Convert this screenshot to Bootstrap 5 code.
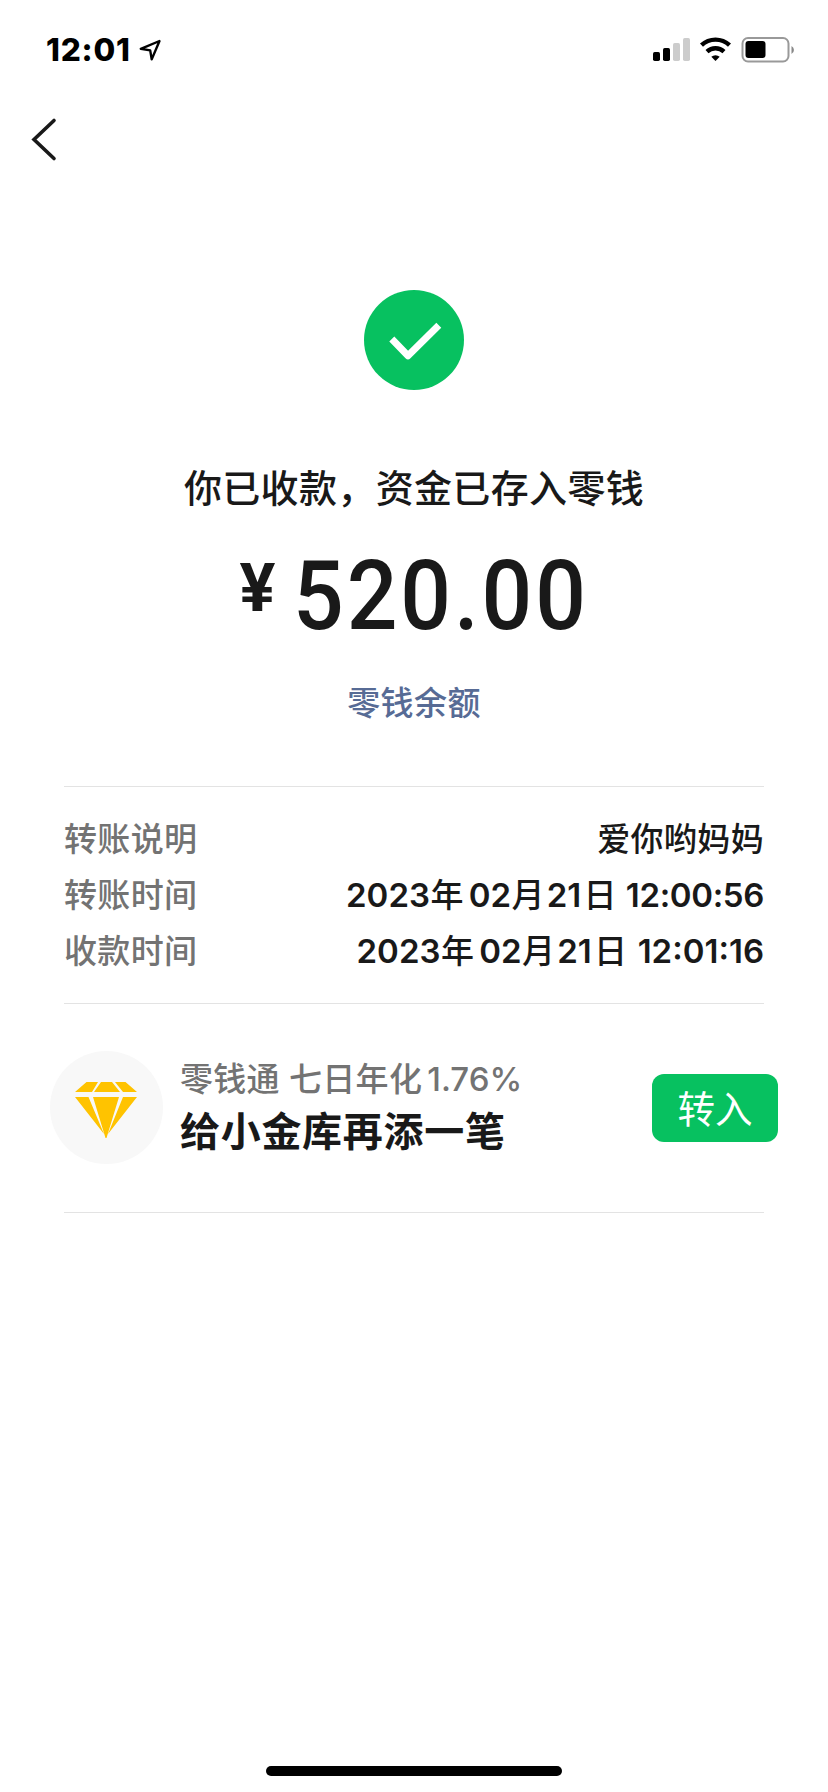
<!DOCTYPE html>
<html lang="zh-CN">
<head>
<meta charset="utf-8">
<meta name="viewport" content="width=device-width, initial-scale=1">
<title>收款详情</title>
<link href="https://cdn.jsdelivr.net/npm/bootstrap@5.3.0/dist/css/bootstrap.min.css" rel="stylesheet">
<style>
  body { font-family: Inter, "Noto Sans CJK SC", sans-serif; color: #191919; background: #fff; font-weight: 500; }
  .screen { height: 1792px; overflow: hidden; }
  svg { display: block; flex: none; }
  .status-bar { height: 100px; padding: 0 33px 0 46px; color: #000; }
  .clock { font-size: 31.5px; font-weight: 800; line-height: 100px; letter-spacing: .8px; }
  .nav-top { height: 80px; padding-left: 30px; }
  .result-icon { margin-top: 110px; }
  .headline { font-size: 38px; line-height: 56px; letter-spacing: .35px; margin-top: 70px; }
  .amount { font-family: Roboto, sans-serif; font-weight: 500; font-size: 96px; line-height: 100px; margin-top: 30px; }
  .yen { font-size: 67px; font-weight: 700; line-height: 72px; margin: 6px 18px 0 0; }
  .digits { letter-spacing: 3.1px; transform: scaleX(.93); transform-origin: left center; margin-right: -23px; }
  .balance-link { color: #576b95; font-size: 33px; line-height: 48px; letter-spacing: .4px; margin-top: 33px; text-decoration: none; }
  .details { margin: 59px 64px 0; border-top: 1px solid #e3e3e3; border-bottom: 1px solid #e3e3e3; padding: 24px 0; }
  .details .line { height: 56px; font-size: 33px; line-height: 56px; letter-spacing: .35px; }
  .details .name { color: #737373; }
  .stamp { display: flex; font-weight: 600; letter-spacing: 0; white-space: nowrap; }
  .stamp > span { display: flex; justify-content: center; }
  .stamp .yr { width: 84px; }
  .stamp .mo { width: 42px; margin-left: 5px; }
  .stamp .dy { width: 38px; }
  .stamp .cn { width: 34px; font-weight: 500; }
  .stamp .tm { width: 138px; margin-left: 9px; justify-content: flex-end; letter-spacing: -.35px; }
  .stamp .tm-narrow { width: 127.5px; letter-spacing: 0; }
  .promo { margin: 0 50px; height: 208px; padding-bottom: 1px; }
  .gem { width: 113px; height: 113px; background: #f8f8f8; }
  .gem svg { margin: 5px 1px 0 0; }
  .promo-text { margin-left: 17px; padding-top: 1px; }
  .rate { color: #737373; font-size: 33px; line-height: 48px; letter-spacing: .3px; }
  .percent { margin-left: 5px; letter-spacing: 0; }
  .pitch { font-size: 40px; line-height: 58px; font-weight: 700; letter-spacing: .7px; }
  .btn-in { --bs-btn-bg: #07c160; --bs-btn-color: #fff; --bs-btn-border-width: 0; width: 126px; height: 68px; border-radius: 12px; font-size: 37.5px; padding: 3px 0 0; line-height: 63px; font-weight: 400; margin-top: 1px; }
  .rule { height: 1px; margin: 0 64px; background: #e3e3e3; }
  .home-bar { width: 296px; height: 10px; background: #000; margin-bottom: 16px; }
</style>
</head>
<body>
<main class="screen d-flex flex-column">
  <header class="status-bar d-flex align-items-center justify-content-between">
    <div class="d-flex align-items-center">
      <span class="clock">12:01</span>
      <svg class="ms-2" width="24" height="24" viewBox="0 0 24 24" fill="none" stroke="#000" stroke-width="2.4" stroke-linejoin="round"><path d="M20.500 3 1.800 10.800l9.400 1.600 1.500 9Z"/></svg>
    </div>
    <svg width="142" height="26" viewBox="0 0 142 26">
      <rect x="0" y="15" width="7" height="9" rx="1.7"/><rect x="10" y="11" width="7" height="13" rx="1.7"/>
      <g fill="#ccc"><rect x="20" y="6" width="7" height="18" rx="1.7"/><rect x="30" y="1" width="7" height="23" rx="1.7"/></g>
      <g fill="none" stroke="#000" stroke-width="4.4"><path d="M48.500 8.200a20.500 20.500 0 0 1 28 0"/><path d="M54 14.600a12.600 12.600 0 0 1 17 0"/></g>
      <path d="M58.300 19.800a6.200 6.200 0 0 1 8.400 0L62.500 24Z"/>
      <rect x="89.500" y="1" width="46" height="23.500" rx="5.500" fill="none" stroke="#999" stroke-width="2"/>
      <rect x="92.500" y="4" width="20" height="17" rx="3"/>
      <path d="M138.500 9a4.500 4.500 0 0 1 0 8Z" fill="#888"/>
    </svg>
  </header>
  <nav class="nav-top">
    <svg width="28" height="80" viewBox="0 0 28 80" fill="none" stroke="#191919" stroke-width="3.600" stroke-linecap="round"><path d="M24 20.500 4 39.500l20 19"/></svg>
  </nav>
  <section class="d-flex flex-column align-items-center">
    <svg class="result-icon" width="100" height="100" viewBox="0 0 100 100"><circle cx="50" cy="50" r="50" fill="#07c160"/><path d="M27.800 49 44 65.700 74.800 35.300" fill="none" stroke="#fff" stroke-width="7" stroke-linejoin="round"/></svg>
    <div class="headline">你已收款，资金已存入零钱</div>
    <div class="amount d-flex"><span class="yen">¥</span><span class="digits">520.00</span></div>
    <a class="balance-link" href="#">零钱余额</a>
  </section>
  <section class="details">
    <div class="line d-flex justify-content-between"><span class="name">转账说明</span><span>爱你哟妈妈</span></div>
    <div class="line d-flex justify-content-between"><span class="name">转账时间</span><div class="stamp"><span class="yr">2023</span><span class="cn">年</span><span class="mo">02</span><span class="cn">月</span><span class="dy">21</span><span class="cn">日</span><span class="tm">12:00:56</span></div></div>
    <div class="line d-flex justify-content-between"><span class="name">收款时间</span><div class="stamp"><span class="yr">2023</span><span class="cn">年</span><span class="mo">02</span><span class="cn">月</span><span class="dy">21</span><span class="cn">日</span><span class="tm tm-narrow">12:01:16</span></div></div>
  </section>
  <section class="promo d-flex align-items-center">
    <div class="gem rounded-circle d-flex align-items-center justify-content-center">
      <svg width="64" height="58" viewBox="0 0 64 58" fill="#ffc300"><path d="M12.500 1H24l-6 10H1ZM27 1h11l8 10H20ZM41 1h10.500L63 11H49ZM1 16h13.500L30 53ZM19 16h26L32.500 57h-1ZM49 16h14L34 53Z"/></svg>
    </div>
    <div class="promo-text flex-grow-1">
      <div class="rate">零钱通 七日年化<span class="percent">1.76%</span></div>
      <div class="pitch">给小金库再添一笔</div>
    </div>
    <button class="btn btn-in" type="button">转入</button>
  </section>
  <div class="rule"></div>
  <div class="home-bar rounded-pill mt-auto align-self-center"></div>
</main>
<script src="https://cdn.jsdelivr.net/npm/bootstrap@5.3.0/dist/js/bootstrap.bundle.min.js"></script>
</body>
</html>
